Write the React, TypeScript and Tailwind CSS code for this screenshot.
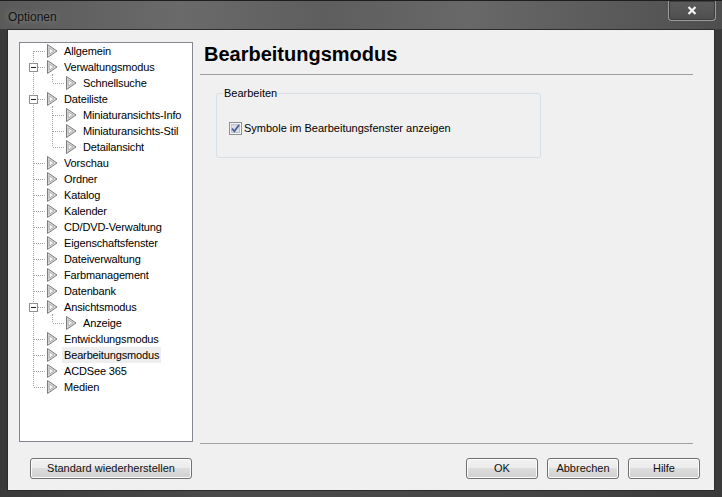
import React from 'react'

type TreeNode = { label: string; children?: string[] }

const tree: TreeNode[] = [
  { label: 'Allgemein' },
  { label: 'Verwaltungsmodus', children: ['Schnellsuche'] },
  { label: 'Dateiliste', children: ['Miniaturansichts-Info', 'Miniaturansichts-Stil', 'Detailansicht'] },
  { label: 'Vorschau' },
  { label: 'Ordner' },
  { label: 'Katalog' },
  { label: 'Kalender' },
  { label: 'CD/DVD-Verwaltung' },
  { label: 'Eigenschaftsfenster' },
  { label: 'Dateiverwaltung' },
  { label: 'Farbmanagement' },
  { label: 'Datenbank' },
  { label: 'Ansichtsmodus', children: ['Anzeige'] },
  { label: 'Entwicklungsmodus' },
  { label: 'Bearbeitungsmodus' },
  { label: 'ACDSee 365' },
  { label: 'Medien' },
]

type Row = {
  label: string
  level: 0 | 1
  first: boolean
  lastTop: boolean
  hasChildren: boolean
  lastChild: boolean
}

const rows: Row[] = []
tree.forEach((n, i) => {
  rows.push({
    label: n.label,
    level: 0,
    first: i === 0,
    lastTop: i === tree.length - 1,
    hasChildren: !!n.children,
    lastChild: false,
  })
  n.children?.forEach((c, j) => {
    rows.push({
      label: c,
      level: 1,
      first: false,
      lastTop: false,
      hasChildren: false,
      lastChild: j === n.children!.length - 1,
    })
  })
})

const DOT = { stroke: '#a0a0a0', strokeDasharray: '1 1', shapeRendering: 'crispEdges' as const }

function Arrow({ x }: { x: number }) {
  return (
    <g>
      <polygon points={`${x + 0.5},1.5 ${x + 10},8 ${x + 0.5},14.5`} fill="#dadada" stroke="#7c7c7c" />
      <polygon points={`${x + 2.2},4.8 ${x + 7},8 ${x + 2.2},11.2`} fill="#f7f7f7" stroke="#aeaeae" />
    </g>
  )
}

function TreeRow({ row }: { row: Row }) {
  const w = row.level === 0 ? 42 : 61
  const col0 = 13.5
  const col1 = 32.5
  return (
    <div className="flex h-4 items-center">
      <svg width={w} height={16} className="shrink-0">
        {/* level 0 vertical guide */}
        <line x1={col0} x2={col0} y1={row.first ? 8 : 0} y2={row.lastTop ? 8 : 16} {...DOT} />
        {row.level === 0 && <line x1={col0} x2={26} y1={8.5} y2={8.5} {...DOT} />}
        {row.level === 0 && row.hasChildren && <line x1={col1} x2={col1} y1={15} y2={16} {...DOT} />}
        {row.level === 1 && (
          <>
            <line x1={col1} x2={col1} y1={0} y2={row.lastChild ? 8 : 16} {...DOT} />
            <line x1={col1} x2={45} y1={8.5} y2={8.5} {...DOT} />
          </>
        )}
        {row.hasChildren && (
          <g shapeRendering="crispEdges">
            <rect x={9.5} y={4.5} width={8} height={8} fill="#fff" stroke="#919191" />
            <line x1={11} x2={16} y1={8.5} y2={8.5} stroke="#222" />
          </g>
        )}
        <Arrow x={row.level === 0 ? 27 : 46} />
      </svg>
      <span
        className={
          'px-[2px] leading-4 whitespace-nowrap ' +
          (row.label === 'Bearbeitungsmodus' && row.level === 0 ? 'bg-[#eeeeee]' : '')
        }
      >
        {row.label}
      </span>
    </div>
  )
}

function Button({ children, className = '' }: { children: React.ReactNode; className?: string }) {
  return (
    <button
      className={
        'h-[21px] rounded-[3px] border border-[#707070] bg-[linear-gradient(#f2f2f2_0%,#ebebeb_50%,#dddddd_50%,#cfcfcf_100%)] text-[11px] text-[#111] leading-none shadow-[inset_0_0_0_1px_#fcfcfc] ' +
        className
      }
    >
      {children}
    </button>
  )
}

export default function App() {
  return (
    <div className="flex h-[497px] w-[722px] flex-col overflow-hidden border-t border-[#1e1e1e] bg-[linear-gradient(90deg,#3a3a3a,#4a4a4a_30%,#464646_70%,#3a3a3a)] font-['Liberation_Sans',Arial,sans-serif]">
      {/* title bar */}
      <div className="flex h-[28px] shrink-0 items-start justify-between bg-[linear-gradient(90deg,#5a5a5a,#6a6a6a_25%,#5e5e5e_45%,#686868_65%,#5a5a5a_85%,#4e4e4e)]">
        <span className="ml-[8px] mt-[9px] text-[12px] leading-[14px] text-[#141414] [text-shadow:0_0_6px_#9a9a9a]">
          Optionen
        </span>
        <div className="mr-[6px] flex h-[20px] w-[48px] items-center justify-center rounded-b-[4px] border border-t-0 border-[#9c9c9c] bg-[linear-gradient(180deg,#5c5c5c,#4e4e4e)] shadow-[inset_0_0_0_1px_#3c3c3c]">
          <svg width="10" height="9" viewBox="0 0 10 9">
            <path d="M1.5 1 L8.5 8 M8.5 1 L1.5 8" stroke="#f4f4f4" strokeWidth="2.2" />
          </svg>
        </div>
      </div>

      {/* client area */}
      <div className="mx-[7px] mb-[6px] flex flex-1 flex-col border border-[#2c2c2c] bg-[#f0f0f0] pl-[11px] pt-[12px] text-[11px] text-black">
        <div className="flex">
          {/* tree */}
          <div className="h-[400px] w-[174px] border border-[#828790] bg-white tracking-[-0.15px]">
            {rows.map((r, i) => (
              <TreeRow key={i} row={r} />
            ))}
          </div>

          {/* page */}
          <div className="ml-[7px] flex h-[402px] w-[493px] flex-col">
            <h1 className="pl-[4px] text-[20px] font-bold leading-[24px] text-black">Bearbeitungsmodus</h1>
            <div className="mt-[8px] h-px bg-[#a0a0a0]" />
            <fieldset className="ml-[16px] mt-[12px] w-[325px] rounded-[3px] border border-[#d5dfe5] pb-[22px] pl-[12px] pt-[22px]">
              <legend className="-ml-[6px] px-[1px] text-[11px] leading-[13px]">Bearbeiten</legend>
              <label className="flex items-center gap-[2px]">
                <svg width="13" height="13" viewBox="0 0 13 13" className="shrink-0">
                  <rect x="0.5" y="0.5" width="12" height="12" fill="#f4f4f4" stroke="#8e8f8f" shapeRendering="crispEdges" />
                  <rect x="2.5" y="2.5" width="8" height="8" fill="#dcdee3" stroke="#c0c4ca" shapeRendering="crispEdges" />
                  <path d="M3 6.5 L5.3 9.3 L10 3" fill="none" stroke="#4a5f97" strokeWidth="1.8" />
                </svg>
                <span className="leading-[13px]">Symbole im Bearbeitungsfenster anzeigen</span>
              </label>
            </fieldset>
            <div className="mt-auto h-px bg-[#a0a0a0]" />
          </div>
        </div>

        {/* buttons */}
        <div className="mt-[14px] flex pr-[14px]">
          <Button className="ml-[11px] w-[162px]">Standard wiederherstellen</Button>
          <div className="ml-auto flex gap-[9px]">
            <Button className="w-[72px]">OK</Button>
            <Button className="w-[72px]">Abbrechen</Button>
            <Button className="w-[72px]">Hilfe</Button>
          </div>
        </div>
      </div>
    </div>
  )
}
